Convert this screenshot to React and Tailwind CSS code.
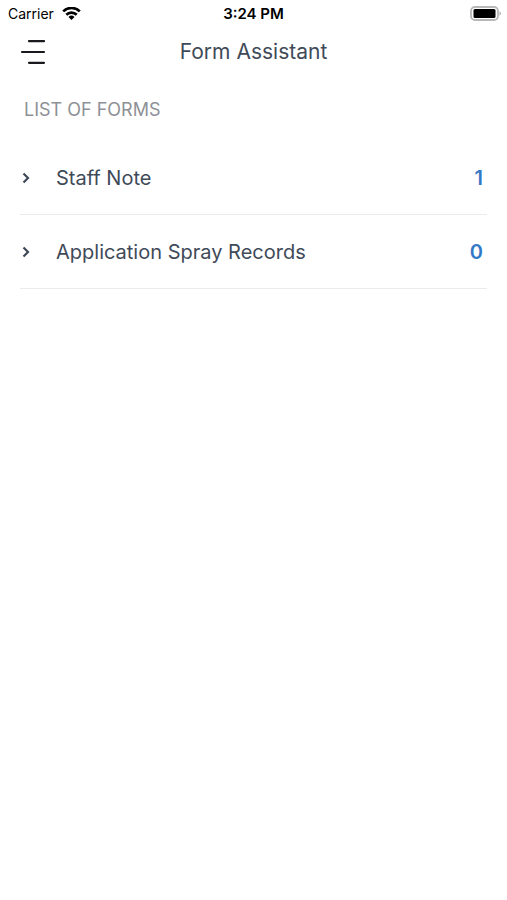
import React from "react";

const forms = [
  { name: "Staff Note", count: 1 },
  { name: "Application Spray Records", count: 0 },
];

const StatusBar = () => {
  return (
    <div className="grid grid-cols-[1fr_auto_1fr] items-center h-7 px-2 text-black">
      <div className="flex items-center gap-2">
        <span className="text-sm">Carrier</span>
        <svg width="19" height="15" viewBox="0 0 19 15" fill="none" stroke="currentColor" strokeWidth="2.7" aria-hidden="true">
          <path d="M1.2 4.4a11.8 11.8 0 0 1 16.600 0" />
          <path d="M4.3 7.700a7.4 7.4 0 0 1 10.400 0" />
          <path d="M9.5 13l-3-3.100a4.3 4.3 0 0 1 6 0z" fill="currentColor" stroke="none" />
        </svg>
      </div>
      <span className="text-[15px] font-semibold text-center">3:24 PM</span>
      <svg className="justify-self-end overflow-visible" width="29" height="16" viewBox="0 0 29 16" aria-hidden="true">
        <rect x="1" y="1" width="27" height="13" rx="4" fill="#fff" stroke="#b8b8b8" strokeWidth="1.8" />
        <rect x="3.5" y="3" width="22" height="9" rx="1.5" fill="#000" />
        <path d="M29.500 5.200c2 1 2 3.500 0 4.500z" fill="#b0b0b0" />
      </svg>
    </div>
  );
};

const Header = () => {
  return (
    <header className="grid grid-cols-[1fr_auto_1fr] items-center h-12 px-5">
      <button type="button" aria-label="Menu" className="justify-self-start text-[#1a1a1e]">
        <svg width="26" height="26" viewBox="0 0 26 26" fill="none" stroke="currentColor" strokeWidth="2.2" strokeLinecap="round">
          <path d="M9 2.200h15M2 13h22M9 23.800h15" />
        </svg>
      </button>
      <h1 className="text-[21px] leading-8 text-[#3f4a59]">Form Assistant</h1>
    </header>
  );
};

const App = () => {
  return (
    <div className="min-h-screen w-full bg-white font-['Inter',sans-serif]">
      <StatusBar />
      <Header />
      <main className="px-5 pt-5">
        <h2 className="px-1 text-lg text-[#8e9196]">LIST OF FORMS</h2>
        <ul className="mt-[17px]">
          {forms.map((form) => (
            <li key={form.name} className="border-b border-[#ebebeb]">
              <button type="button" className="flex items-center w-full h-[73px] pl-0.5 pr-1 text-left text-xl text-[#3f4a59]">
                <svg width="8" height="12" viewBox="0 0 8 12" fill="none" stroke="currentColor" strokeWidth="2.2" aria-hidden="true">
                  <path d="M1.500 1.500l4.500 4.500-4.500 4.500" />
                </svg>
                <span className="flex-1 ml-6.5">{form.name}</span>
                <span className="font-semibold text-[#3478c6]">{form.count}</span>
              </button>
            </li>
          ))}
        </ul>
      </main>
    </div>
  );
};

export default App;
